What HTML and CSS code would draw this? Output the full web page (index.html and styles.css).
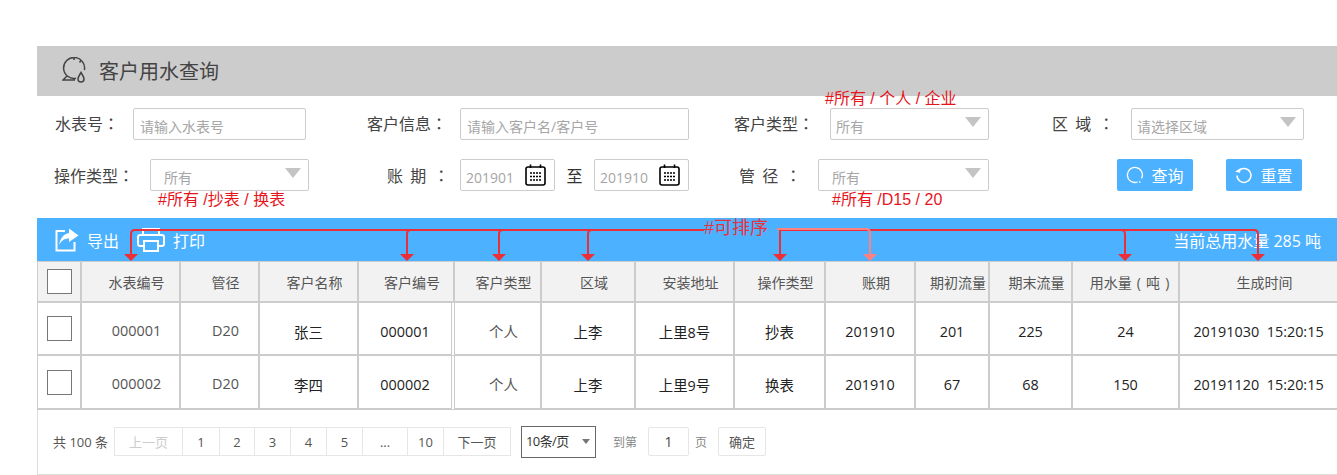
FILE: index.html
```html
<!DOCTYPE html>
<html>
<head>
    <meta charset="utf-8">
    <title>客户用水查询</title>
    <link rel="stylesheet" href="styles.css">
</head>
<body>
    <div class="page">
        <div class="title-bar">
            <svg class="title-icon" width="24" height="26" viewBox="0 0 24 26">
                <path d="M14 21.3A10.5 10.5 0 1 1 22.4 13M5 19L1 23H13M12 .5V3M19 3.500L17.500 5.500" fill="none" stroke="#444" stroke-width="1.500"/>
                <path d="M19 15.500C17.500 18 16 20 16 22a3 3 0 0 0 6 0C22 20 20.500 18 19 15.500Z" fill="none" stroke="#444" stroke-width="1.500"/>
            </svg>
            <span>客户用水查询</span>
        </div>

        <div class="filters">
            <div class="filter-row row-one">
                <div class="field">
                    <label class="label">水表号<span class="colon">：</span></label>
                    <div class="box w-173 pad-7">请输入水表号</div>
                </div>
                <div class="field">
                    <label class="label label-93">客户信息<span class="colon">：</span></label>
                    <div class="box w-229 pad-7">请输入客户名/客户号</div>
                </div>
                <div class="field">
                    <label class="label label-96">客户类型<span class="colon">：</span></label>
                    <div class="box w-159 pad-6 has-note">
                        所有<i class="caret"></i>
                        <span class="note note-top">#所有 / 个人 / 企业</span>
                    </div>
                </div>
                <div class="field">
                    <label class="label label-79 spaced">区 域 <span class="colon">：</span></label>
                    <div class="box w-173 pad-6">请选择区域<i class="caret"></i></div>
                </div>
            </div>

            <div class="filter-row row-two">
                <div class="field">
                    <label class="label label-96">操作类型<span class="colon">：</span></label>
                    <div class="box w-159 pad-14 has-note">
                        所有<i class="caret"></i>
                        <span class="note note-bottom">#所有 /抄表 / 换表</span>
                    </div>
                </div>
                <div class="field">
                    <label class="label label-73 spaced">账 期 <span class="colon">：</span></label>
                    <div class="box w-95 pad-6">
                        201901
                        <svg class="cal" width="21" height="22" viewBox="0 0 21 22">
                            <use href="#calendar"/>
                        </svg>
                    </div>
                    <span class="range-to">至</span>
                    <div class="box w-95 pad-6">
                        201910
                        <svg class="cal" width="21" height="22" viewBox="0 0 21 22">
                            <use href="#calendar"/>
                        </svg>
                    </div>
                </div>
                <div class="field">
                    <label class="label label-79 spaced">管 径 <span class="colon">：</span></label>
                    <div class="box w-171 pad-14 has-note">
                        所有<i class="caret"></i>
                        <span class="note note-bottom-2">#所有 /D15 / 20</span>
                    </div>
                </div>
                <div class="field actions">
                    <button class="btn">
                        <svg width="18" height="18" viewBox="0 0 18 18"><path d="M11.500 16A7.500 7.500 0 1 1 15.500 12.500M13 15.500L14.500 16.500" fill="none" stroke="#fff" stroke-width="1.300"/></svg>
                        查询
                    </button>
                    <button class="btn">
                        <svg width="18" height="18" viewBox="0 0 18 18"><path d="M4 4.500A7 7 0 1 1 2 9.500" fill="none" stroke="#fff" stroke-width="1.500"/><path d="M5.500 1.500V6.500H.5Z" fill="#fff" transform="rotate(10 4 4)"/></svg>
                        重置
                    </button>
                </div>
            </div>
        </div>

        <div class="grid-wrap">
            <div class="toolbar">
                <a class="tool">
                    <svg width="25" height="24" viewBox="0 0 25 24">
                        <path d="M11 3H2.500V22.500H20.500V14" fill="none" stroke="#fff" stroke-width="2"/>
                        <path d="M15 0.500L24.500 7.500L15 14V10.500C10.500 10.500 7.500 12.500 5 17C6 10.500 10 5.500 15 5Z" fill="#fff"/>
                    </svg>
                    导出
                </a>
                <a class="tool">
                    <svg width="28" height="24" viewBox="0 0 28 24">
                        <path d="M6 6V1H22V6M6 18H3.500Q1 18 1 16V9Q1 7 3.500 7H24.500Q27 7 27 9V16Q27 18 24.500 18H22M7 13H21V23H7Z" fill="none" stroke="#fff" stroke-width="2"/>
                    </svg>
                    打印
                </a>
                <span class="total">当前总用水量 285 吨</span>
            </div>

            <table class="grid">
                <colgroup>
                    <col class="c-check"><col class="c-no"><col class="c-pipe"><col class="c-name"><col class="c-cust">
                    <col class="c-type"><col class="c-area"><col class="c-addr"><col class="c-op"><col class="c-period">
                    <col class="c-start"><col class="c-end"><col class="c-used"><col class="c-time">
                </colgroup>
                <thead>
                    <tr>
                        <th class="check-cell"><i class="check"></i></th>
                        <th>水表编号</th><th>管径</th><th>客户名称</th><th>客户编号</th><th>客户类型</th><th>区域</th>
                        <th>安装地址</th><th>操作类型</th><th>账期</th><th>期初流量</th><th>期末流量</th><th class="wide-head">用水量 ( 吨 )</th><th>生成时间</th>
                    </tr>
                </thead>
                <tbody>
                    <tr class="row-a">
                        <td class="check-cell"><i class="check"></i></td>
                        <td class="muted">000001</td><td class="muted">D20</td><td>张三</td><td class="double">000001</td>
                        <td class="muted">个人</td><td>上李</td><td>上里8号</td><td>抄表</td><td>201910</td>
                        <td>201</td><td>225</td><td>24</td><td>20191030&nbsp; 15:20:15</td>
                    </tr>
                    <tr class="row-b">
                        <td class="check-cell"><i class="check"></i></td>
                        <td class="muted">000002</td><td class="muted">D20</td><td>李四</td><td class="double">000002</td>
                        <td class="muted">个人</td><td>上李</td><td>上里9号</td><td>换表</td><td>201910</td>
                        <td>67</td><td>68</td><td>150</td><td>20191120&nbsp; 15:20:15</td>
                    </tr>
                </tbody>
            </table>

            <div class="pager">
                <span class="pager-total">共 100 条</span>
                <div class="pages">
                    <a class="off w-68">上一页</a><a class="w-37">1</a><a class="w-35">2</a><a class="w-36">3</a><a class="w-36">4</a><a class="w-36">5</a><a class="w-45">...</a><a class="w-36">10</a><a class="w-68">下一页</a>
                </div>
                <div class="size-select">10条/页<i class="size-caret"></i></div>
                <span class="pager-text goto">到第</span>
                <div class="page-input">1</div>
                <span class="pager-text unit">页</span>
                <a class="confirm">确定</a>
            </div>

            <svg class="sort-lines" width="1300" height="40" viewBox="37 225 1300 40">
                <g fill="none" stroke="#ec2e36" stroke-width="2">
                    <path d="M131 256V234Q131 230 135 230H704"/>
                    <path d="M407 256V234Q407 230 411 230"/>
                    <path d="M499 256V234Q499 230 503 230"/>
                    <path d="M588 256V234Q588 230 592 230"/>
                    <path d="M780 256V230"/>
                    <path d="M780 230H1254Q1258 230 1258 234V256"/>
                    <path d="M1125 256V234Q1125 230 1121 230"/>
                </g>
                <path d="M124 254H138L131 261ZM400 254H414L407 261ZM492 254H506L499 261ZM581 254H595L588 261ZM773 254H787L780 261ZM1118 254H1132L1125 261ZM1251 254H1265L1258 261Z" fill="#ec2e36"/>
                <path d="M777 229H866Q870 229 870 233V256" fill="none" stroke="#ff8080" stroke-width="2"/>
                <path d="M863 254H877L870 261Z" fill="#ff8080"/>
            </svg>
            <span class="note sort-note">#可排序</span>
        </div>
    </div>

    <svg width="0" height="0" class="defs">
        <symbol id="calendar" viewBox="0 0 21 22">
            <rect x="1" y="3" width="19" height="18" rx="2" fill="none" stroke="#000" stroke-width="1.600"/>
            <path d="M5.500 0.500V4M15.500 0.500V4" stroke="#000" stroke-width="1.600"/>
            <path d="M5 9H17M5 12.500H17M5 16H17" stroke="#000" stroke-width="1.400" stroke-dasharray="2 1"/>
        </symbol>
    </svg>
</body>
</html>
```

FILE: styles.css
```css
* {
    box-sizing: border-box;
}

body {
    margin: 0;
    padding: 0;
    background: white;
    font-family: "Open Sans", "Noto Sans CJK SC", sans-serif;
    color: #444;
    overflow: hidden;
}

.defs {
    display: block;
    height: 0;
}

.page {
    width: 1300px;
    margin-left: 37px;
    padding-top: 46px;
}

.title-bar {
    height: 50px;
    background: #ccc;
    display: flex;
    align-items: center;
    padding-left: 25px;
    padding-bottom: 2px;
    font-size: 20px;
    color: #444;
}

.title-icon {
    margin-right: 13px;
}

/* filters */
.filters {
    height: 122px;
    padding-top: 12px;
}

.filter-row {
    display: grid;
    height: 32px;
    margin-bottom: 19px;
}

.row-one {
    padding-left: 18px;
    grid-template-columns: 312px 367px 318px 1fr;
}

.row-two {
    padding-left: 17px;
    grid-template-columns: 333px 352px 378px 1fr;
}

.field {
    display: flex;
    align-items: center;
}

.label {
    width: 78px;
    font-size: 16px;
    line-height: 24px;
    color: #444;
}

.row-one .label {
    margin-top: -2px;
}

.row-two .label {
    margin-top: 1px;
}

.label-93 { width: 93px; }
.label-96 { width: 96px; }
.label-79 { width: 79px; }
.label-73 { width: 73px; }

.row-one .label-79,
.row-two .label-79 {
    width: 79px;
}

.spaced {
    word-spacing: 3px;
}

/* TC form of the colon sits in the middle of its box */
.colon {
    font-family: "Noto Sans CJK TC", sans-serif;
}

.box {
    position: relative;
    height: 32px;
    border: 1px solid #ccc;
    border-radius: 2px;
    display: flex;
    align-items: center;
    justify-content: space-between;
    font-size: 14px;
    line-height: 20px;
    color: #a6a6a6;
    padding-top: 6px;
    padding-right: 7px;
}

.w-173 { width: 173px; }
.w-229 { width: 229px; }
.w-159 { width: 159px; }
.w-171 { width: 171px; }
.w-95 { width: 95px; }
.pad-6 { padding-left: 5px; }
.pad-7 { padding-left: 6px; }
.pad-14 { padding-left: 13px; }

.caret {
    width: 0;
    height: 0;
    margin-top: -10px;
    border-left: 8px solid transparent;
    border-right: 8px solid transparent;
    border-top: 10px solid #c4c4c4;
}

.cal {
    margin-top: -6px;
    margin-right: 1px;
}

.range-to {
    width: 39px;
    text-align: center;
    font-size: 16px;
    color: #333;
}

.note {
    position: absolute;
    font-family: "Liberation Sans", "Noto Sans CJK SC", sans-serif;
    font-size: 16px;
    line-height: 20px;
    color: #e8141c;
    white-space: nowrap;
}

.note-top {
    left: -6px;
    top: -20px;
}

.note-bottom {
    left: 7px;
    top: 30px;
}

.note-bottom-2 {
    left: 13px;
    top: 30px;
}

.actions {
    gap: 33px;
}

.btn {
    width: 76px;
    height: 32px;
    border: 0;
    border-radius: 2px;
    background: #4cb1ff;
    color: white;
    font-family: inherit;
    font-size: 16px;
    display: flex;
    align-items: center;
    justify-content: center;
    gap: 7px;
    padding: 0;
}

/* table */
.grid-wrap {
    position: relative;
}

.toolbar {
    height: 43px;
    background: #4cb1ff;
    display: flex;
    align-items: center;
    padding-left: 17px;
    padding-right: 16px;
    color: white;
    font-size: 16px;
}

.tool {
    display: flex;
    align-items: center;
    gap: 8px;
    margin-right: 18px;
}

.total {
    margin-left: auto;
    margin-top: 1px;
}

.grid {
    width: 1300px;
    table-layout: fixed;
    border-collapse: separate;
    border-spacing: 0;
    font-size: 14px;
}

.c-check { width: 45px; }
.c-no { width: 99px; }
.c-pipe { width: 79px; }
.c-name { width: 99px; }
.c-cust { width: 96px; }
.c-type { width: 87px; }
.c-area { width: 94px; }
.c-addr { width: 99px; }
.c-op { width: 91px; }
.c-period { width: 90px; }
.c-start { width: 74px; }
.c-end { width: 83px; }
.c-used { width: 107px; }
.c-time { width: 157px; }

.grid th,
.grid td {
    padding: 0;
    text-align: center;
    white-space: nowrap;
    border-right: 2px solid #ccc;
    border-bottom: 2px solid #ccc;
}

.grid th:last-child,
.grid td:last-child {
    border-right: 0;
}

.grid th {
    height: 42px;
    background: #f2f2f2;
    border-top: 1px solid #ccc;
    font-weight: normal;
    color: #555;
    padding-left: 12px;
}

.grid th.wide-head {
    padding-left: 8px;
    word-spacing: 1.500px;
}

.grid td {
    color: #222;
    font-size: 14.400px;
    padding-top: 5px;
}

.row-a td { height: 53px; }
.row-b td { height: 54px; }

.grid td.muted {
    color: #555;
    padding-top: 3px;
    padding-left: 12px;
}

.grid td.double {
    border-right: 4px double #ccc;
}

.grid .check-cell {
    border-left: 1px solid #ccc;
    padding: 0 0 0 1px;
    text-align: left;
}

.check {
    display: block;
    width: 25px;
    height: 25px;
    margin-left: 8px;
    border: 1px solid #777;
    background: white;
}

/* pager */
.pager {
    height: 65px;
    border-left: 1px solid #ddd;
    border-bottom: 1px solid #ddd;
    display: flex;
    align-items: center;
    padding-left: 15px;
    padding-bottom: 1px;
    font-size: 13px;
    color: #555;
}

.pager-total {
    width: 61px;
}

.pages {
    display: flex;
    height: 29px;
    border-top: 1px solid #e6e6e6;
    border-bottom: 1px solid #e6e6e6;
}

.pages a {
    display: flex;
    align-items: center;
    justify-content: center;
    border-left: 1px solid #e6e6e6;
}

.pages a:last-child {
    border-right: 1px solid #e6e6e6;
}

.pages .off {
    color: #ccc;
}

.w-68 { width: 68px; }
.w-37 { width: 37px; }
.w-35 { width: 35px; }
.w-36 { width: 36px; }
.w-45 { width: 45px; }

.size-select {
    width: 75px;
    height: 32px;
    margin-left: 10px;
    border: 1px solid #666;
    display: flex;
    align-items: center;
    justify-content: space-between;
    padding: 0 5px 2px 4px;
    font-size: 13px;
    letter-spacing: -0.600px;
    color: #333;
}

.size-caret {
    width: 0;
    height: 0;
    margin-top: 2px;
    border-left: 4px solid transparent;
    border-right: 4px solid transparent;
    border-top: 5px solid #777;
}

.pager-text {
    font-size: 12px;
    color: #888;
}

.goto {
    margin-left: 17px;
}

.page-input {
    width: 41px;
    height: 29px;
    margin-left: 11px;
    border: 1px solid #e6e6e6;
    border-radius: 2px;
    display: flex;
    align-items: center;
    justify-content: center;
    font-size: 14px;
    color: #444;
}

.unit {
    margin-left: 6px;
}

.confirm {
    width: 48px;
    height: 29px;
    margin-left: 11px;
    border: 1px solid #e6e6e6;
    border-radius: 2px;
    display: flex;
    align-items: center;
    justify-content: center;
}

/* sort annotation, drawn over toolbar and header */
.sort-lines {
    position: absolute;
    left: 0;
    top: 7px;
}

.sort-note {
    left: 667px;
    top: 0;
    font-size: 18px;
    color: #e8323e;
}
```
